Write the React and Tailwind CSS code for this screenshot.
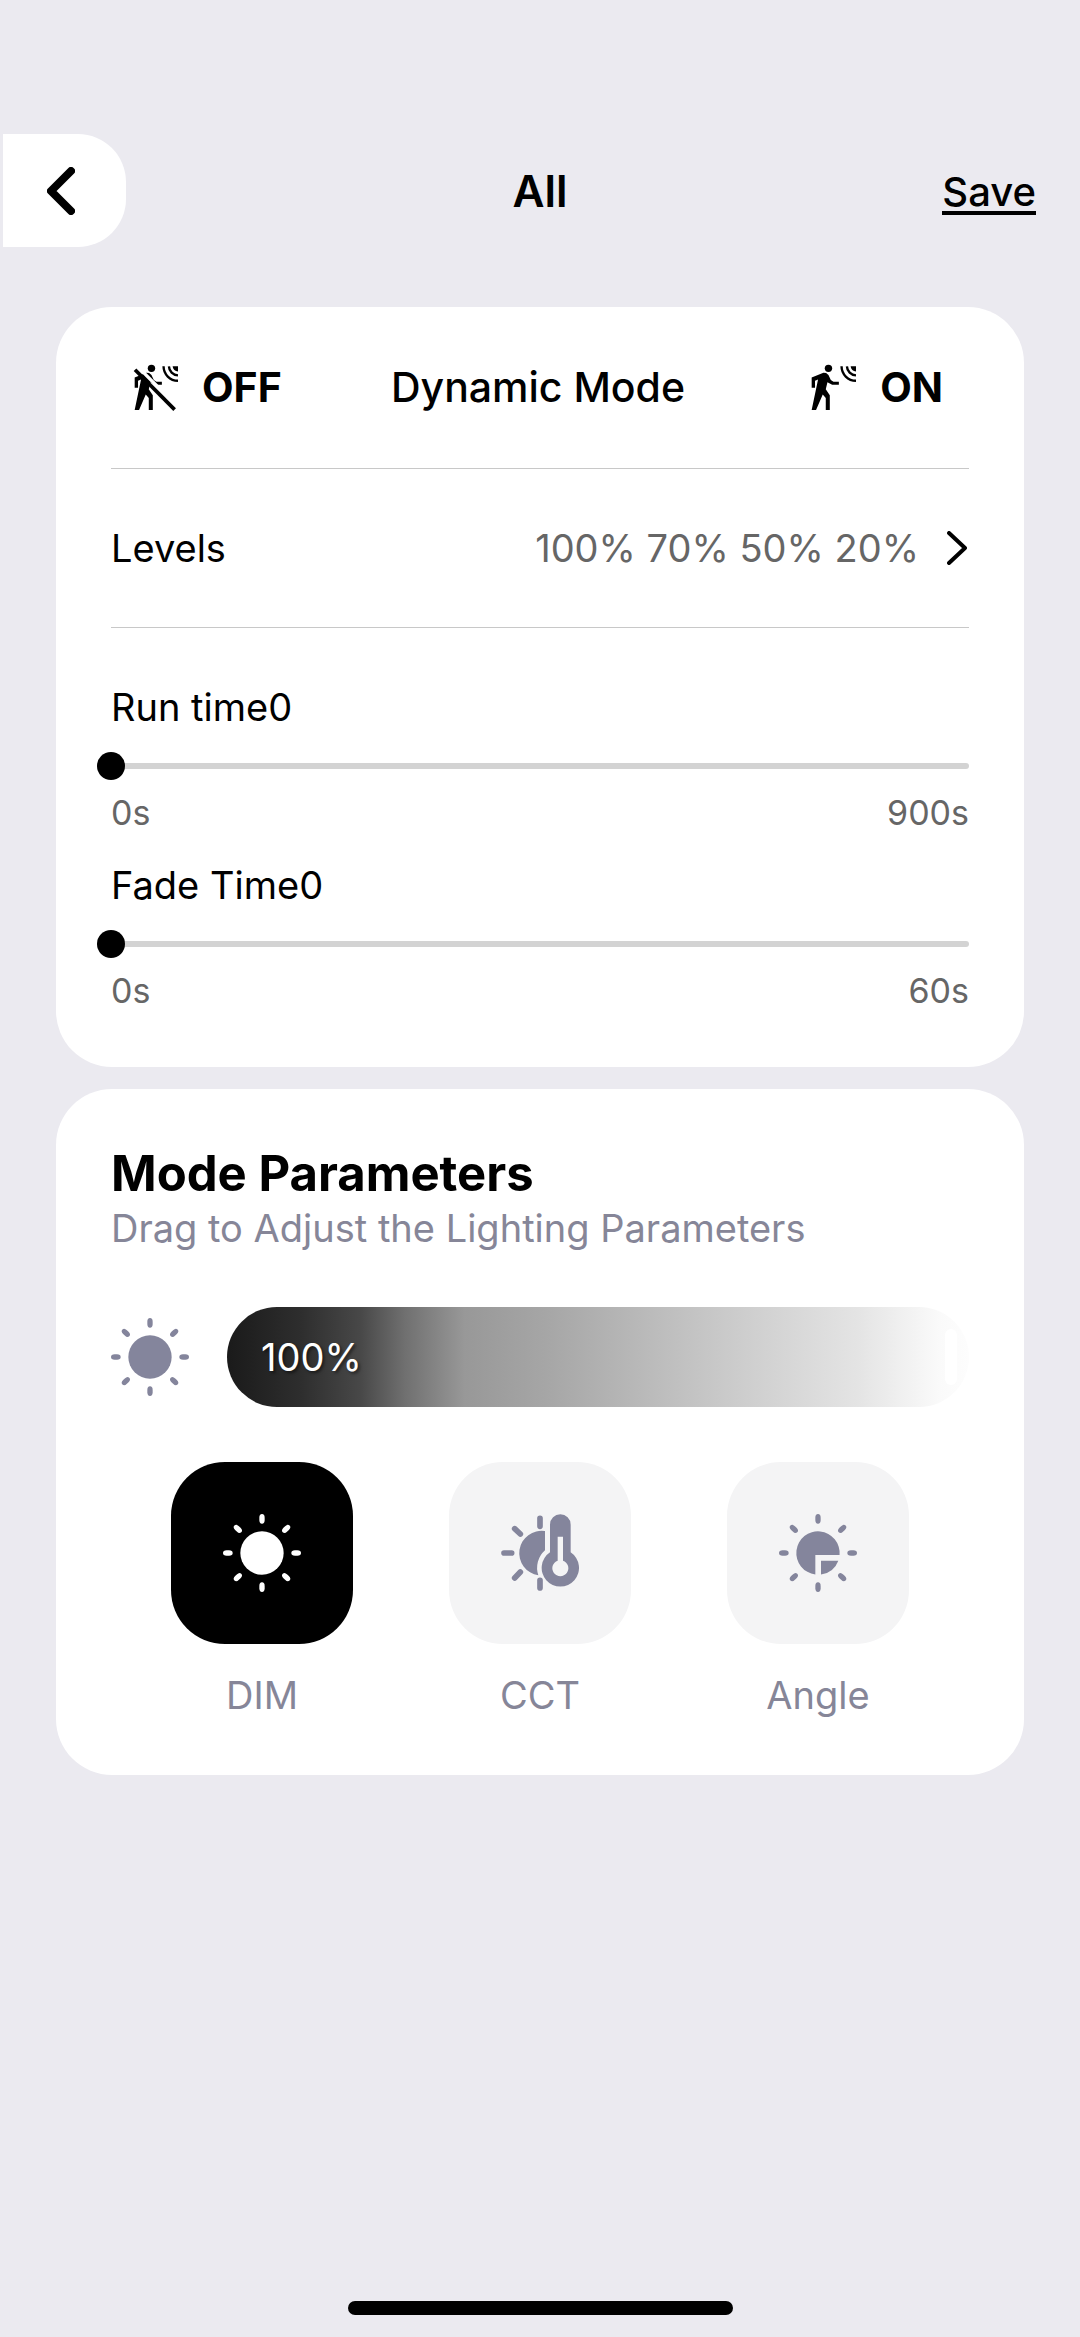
import { useState } from "react";

const RAY_ANGLES = [0, 45, 90, 135, 180, 225, 270, 315];

const MODES = [
  { id: "dim", label: "DIM", Icon: SunIcon },
  { id: "cct", label: "CCT", Icon: ThermometerSunIcon },
  { id: "angle", label: "Angle", Icon: AngleIcon },
];

function SunRays() {
  return RAY_ANGLES.map((angle) => (
    <rect key={angle} x="-8" y="-117" width="16" height="29" rx="8" ry="11" transform={`rotate(${angle})`} />
  ));
}

function SunIcon() {
  return (
    <svg viewBox="-117 -117 234 234" className="h-[78px] w-[78px] shrink-0" fill="currentColor" aria-hidden="true">
      <circle r="65" />
      <SunRays />
    </svg>
  );
}

function AngleIcon() {
  return (
    <svg viewBox="-117 -117 234 234" className="h-[78px] w-[78px] shrink-0" fill="currentColor" aria-hidden="true">
      <path d="M-8 64.5A65 65 0 1 1 64.7 6H-8Z" />
      <path d="M9 23H61A65 65 0 0 1 9 64.4Z" />
      <SunRays />
    </svg>
  );
}

function ThermometerSunIcon() {
  return (
    <svg viewBox="63 103 234 234" className="h-[78px] w-[78px] shrink-0" fill="currentColor" aria-hidden="true">
      <path d="M195 154A67 67 0 1 0 175 287A70 70 0 0 1 195 212Z" />
      <g stroke="currentColor" strokeWidth="17" strokeLinecap="round">
        <path d="M180 116V140M180 302V325M72 220H95M104 147L121 163M104 295L121 277" />
      </g>
      <path
        fillRule="evenodd"
        d="M210 135A31 31 0 0 1 272 135V218A56 56 0 1 1 210 218ZM233 171V243A24 24 0 1 0 249 243V171Z"
      />
    </svg>
  );
}

function MotionIcon({ off }) {
  return (
    <svg viewBox="-2 -2 140 140" className="h-[47px] w-[47px] shrink-0" fill="currentColor" aria-hidden="true">
      <g transform={off ? "translate(3 0)" : undefined}>
        <circle cx="50" cy="11" r="11" />
        <path d="M0 69V38L35 24L43 25L50 31L57 46L65 51H81V60H61L47 52L42 73L54 91V135H42V99L33 89L13 135H0L19 44L10 48V69Z" />
      </g>
      <path d="M116 5H132V20A16 16 0 0 1 116 5Z" />
      <path d="M105 5A28 28 0 0 0 132 32M89 5A43 43 0 0 0 132 48" fill="none" stroke="currentColor" strokeWidth="7" />
      {off ? (
        <>
          <path d="M14 8L132 126" stroke="white" strokeWidth="10" />
          <path d="M4 15L122 134" stroke="currentColor" strokeWidth="11" />
        </>
      ) : null}
    </svg>
  );
}

function TimeSlider({ id, label, max, value, onChange }) {
  return (
    <div>
      <label htmlFor={id} className="block text-[38px] leading-[48px]">
        {label}
        {value}
      </label>
      <div className="relative mt-[21px] flex h-7 items-center">
        <div className="h-1.5 w-full rounded-sm bg-[#d3d3d3]" />
        <input
          id={id}
          type="range"
          min="0"
          max={max}
          value={value}
          onChange={(event) => onChange(Number(event.target.value))}
          className="absolute inset-y-0 -left-3.5 w-[calc(100%+28px)] cursor-pointer appearance-none bg-transparent outline-none [&::-webkit-slider-thumb]:h-7 [&::-webkit-slider-thumb]:w-7 [&::-webkit-slider-thumb]:appearance-none [&::-webkit-slider-thumb]:rounded-full [&::-webkit-slider-thumb]:bg-black"
        />
      </div>
      <div className="mt-[13px] flex justify-between text-[34px] leading-10 text-[#666666]">
        <span>0s</span>
        <span>{max}s</span>
      </div>
    </div>
  );
}

export default function App() {
  const [runTime, setRunTime] = useState(0);
  const [fadeTime, setFadeTime] = useState(0);
  const [brightness, setBrightness] = useState(100);
  const [mode, setMode] = useState("dim");

  return (
    <div className="flex min-h-screen flex-col bg-[#ebeaf0] font-['Inter',sans-serif] text-black">
      <header className="mt-[134px] grid grid-cols-3 items-center">
        <button
          type="button"
          aria-label="Back"
          className="ml-[3px] flex h-[113px] w-[123px] items-center justify-center justify-self-start rounded-r-[48px] bg-white pr-2"
        >
          <svg viewBox="0 0 28 48" className="h-12 w-7" fill="none" aria-hidden="true">
            <path d="M24 4L4 24L24 44" stroke="black" strokeWidth="8" strokeLinecap="round" strokeLinejoin="round" />
          </svg>
        </button>
        <h1 className="text-center text-[44px] font-semibold">All</h1>
        <button
          type="button"
          className="mr-11 justify-self-end border-b-4 border-black pt-1.5 text-[40px] leading-[38px] font-medium"
        >
          Save
        </button>
      </header>

      <main className="mx-14 mt-[60px] flex flex-col gap-[22px]">
        <section className="rounded-[56px] bg-white px-[55px] pb-14">
          <div className="grid h-[162px] grid-cols-[1fr_auto_1fr] items-center border-b border-[#c8c8c8] pr-[26px] pl-[22px] text-[41px]">
            <button type="button" className="flex items-center gap-[22px] justify-self-start font-bold">
              <MotionIcon off />
              OFF
            </button>
            <h2 className="font-medium">Dynamic Mode</h2>
            <button type="button" className="flex items-center gap-[22px] justify-self-end font-bold">
              <MotionIcon />
              ON
            </button>
          </div>

          <button
            type="button"
            className="flex h-[159px] w-full items-center border-b border-[#c8c8c8] text-[38px]"
          >
            <span>Levels</span>
            <span className="ml-auto text-[#666666]">100% 70% 50% 20%</span>
            <svg viewBox="0 0 20 34" className="mr-0.5 ml-7 h-[34px] w-5" fill="none" aria-hidden="true">
              <path d="M2 2L18 17L2 32" stroke="black" strokeWidth="4" strokeLinecap="round" strokeLinejoin="round" />
            </svg>
          </button>

          <div className="mt-[55px] flex flex-col gap-7">
            <TimeSlider id="run-time" label="Run time" max={900} value={runTime} onChange={setRunTime} />
            <TimeSlider id="fade-time" label="Fade Time" max={60} value={fadeTime} onChange={setFadeTime} />
          </div>
        </section>

        <section className="rounded-[56px] bg-white px-[55px] pt-[55px] pb-14">
          <h2 className="text-[49px] leading-[60px] font-bold">Mode Parameters</h2>
          <p className="text-[38px] leading-[48px] text-[#868698]">Drag to Adjust the Lighting Parameters</p>

          <div className="mt-[55px] flex items-center gap-[38px]">
            <div className="text-[#84859c]">
              <SunIcon />
            </div>
            <div className="relative h-[100px] flex-1 overflow-hidden rounded-full bg-linear-[90deg,#1a1a1a_0%,#2e2e2e_10%,#484848_18%,#707070_24%,#989898_32%,#a6a6a6_43%,#c8c8c8_66%,#e4e4e4_85%,#fafafa_96%,#fdfdfd_100%]">
              <input
                type="range"
                id="brightness"
                min="0"
                max="100"
                value={brightness}
                onChange={(event) => setBrightness(Number(event.target.value))}
                className="absolute inset-y-0 left-3 w-[calc(100%-24px)] cursor-pointer appearance-none bg-transparent outline-none [&::-webkit-slider-thumb]:h-14 [&::-webkit-slider-thumb]:w-3 [&::-webkit-slider-thumb]:appearance-none [&::-webkit-slider-thumb]:rounded-full [&::-webkit-slider-thumb]:bg-white"
              />
              <label
                htmlFor="brightness"
                className="pointer-events-none absolute inset-y-0 left-[34px] flex items-center text-[38px] text-white text-shadow-[2px_2px_3px_rgba(0,0,0,0.5)]"
              >
                {brightness}%
              </label>
            </div>
          </div>

          <div className="mt-[55px] grid grid-cols-3 px-3">
            {MODES.map(({ id, label, Icon }) => (
              <button
                key={id}
                type="button"
                aria-pressed={mode === id}
                onClick={() => setMode(id)}
                className="flex flex-col items-center gap-[27px] text-[38px] leading-[48px] text-[#868698]"
              >
                <span
                  className={`flex h-[182px] w-[182px] items-center justify-center rounded-[54px] ${
                    mode === id ? "bg-black text-white" : "bg-[#f4f4f5] text-[#84859c]"
                  }`}
                >
                  <Icon />
                </span>
                {label}
              </button>
            ))}
          </div>
        </section>
      </main>

      <div className="mx-auto mt-auto mb-[22px] h-3.5 w-[385px] rounded-full bg-black" />
    </div>
  );
}
